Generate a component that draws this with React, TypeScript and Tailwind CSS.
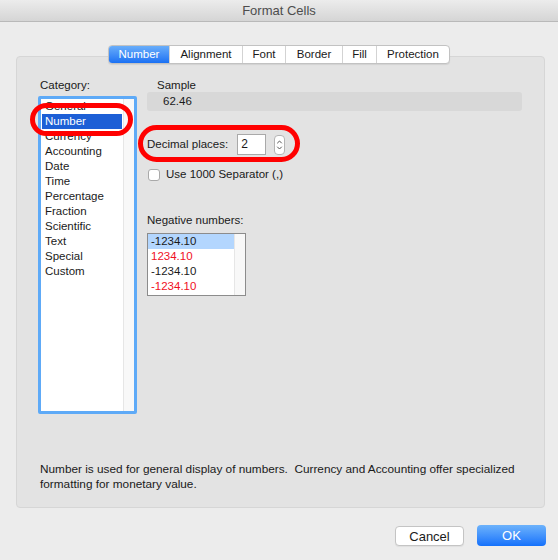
import React from 'react';

const CATEGORIES = [
  'General',
  'Number',
  'Currency',
  'Accounting',
  'Date',
  'Time',
  'Percentage',
  'Fraction',
  'Scientific',
  'Text',
  'Special',
  'Custom',
];

const TABS: Array<{ label: string; w: string }> = [
  { label: 'Number', w: 'w-[60px]' },
  { label: 'Alignment', w: 'w-[73px]' },
  { label: 'Font', w: 'w-[43px]' },
  { label: 'Border', w: 'w-[57px]' },
  { label: 'Fill', w: 'w-[34px]' },
  { label: 'Protection', w: 'w-[73px]' },
];

const NEGATIVES: Array<{ text: string; red: boolean }> = [
  { text: '-1234.10', red: false },
  { text: '1234.10', red: true },
  { text: '-1234.10', red: false },
  { text: '-1234.10', red: true },
];

function Stepper() {
  return (
    <div className="w-[11px] h-[20px] rounded-[4px] border border-[#b4b4b4] bg-white flex items-center justify-center">
      <svg width="7" height="14" viewBox="0 0 7 14" fill="none" stroke="#555" strokeWidth="1" strokeLinecap="round" strokeLinejoin="round">
        <path d="M1.5 5 L3.5 3 L5.5 5" />
        <path d="M1.5 9 L3.5 11 L5.5 9" />
      </svg>
    </div>
  );
}

export default function App() {
  return (
    <div className="relative w-[558px] h-[560px] overflow-hidden bg-[#ececec] text-[#1a1a1a] [font-family:'Liberation_Sans',Arial,sans-serif]">
      {/* title bar */}
      <div className="h-[22px] border-b border-[#b9b9b9] bg-gradient-to-b from-[#ececec] to-[#d5d5d5] flex items-center justify-center text-[13px] text-[#4d4d4d]">
        Format Cells
      </div>

      {/* tabs */}
      <div className="relative z-10 h-[42px] pt-[23px] -mb-[8px] flex justify-center">
        <div className="flex h-[19px] rounded-[4px] border border-[#c2c2c2] bg-white shadow-[0_1px_1px_rgba(0,0,0,0.08)] text-[11.5px]">
          {TABS.map((t, i) => (
            <div
              key={t.label}
              className={`${t.w} flex items-center justify-center ${
                i === 0
                  ? 'rounded-l-[3px] bg-gradient-to-b from-[#68adfa] to-[#1a70f3] text-white'
                  : 'border-l border-[#d3d3d3] text-[#1a1a1a]'
              }`}
            >
              {t.label}
            </div>
          ))}
        </div>
      </div>

      {/* group box */}
      <div className="ml-[16px] w-[529px] h-[452px] rounded-[4px] border border-[#d6d6d6] bg-[#e3e3e3] pt-[21px] pl-[21px] text-[11.5px] flex flex-col">
        <div className="flex">
          <div className="flex flex-col">
            <div className="h-[15px] leading-[15px] pl-[2px]">Category:</div>
            <div className="mt-[3px] w-[99px] h-[318px] rounded-[2px] border-[3px] border-[#5eaaf7] bg-white flex">
              <div className="flex-1 px-[1px]">
                {CATEGORIES.map((c) => (
                  <div
                    key={c}
                    className={`h-[15px] leading-[15px] pl-[3px] ${c === 'Number' ? 'bg-[#1d5fd6] text-white' : ''}`}
                  >
                    {c}
                  </div>
                ))}
              </div>
              <div className="w-[11px] bg-[#f8f8f8] border-l border-[#e6e6e6]" />
            </div>
          </div>

          <div className="ml-[10px] w-[375px] flex flex-col">
            <div className="h-[14px] leading-[14px] pl-[10px]">Sample</div>
            <div className="h-[19px] rounded-[3px] bg-[#d8d8d8] pl-[16px] leading-[19px]">62.46</div>

            <div className="mt-[23px] h-[21px] flex items-center">
              <span>Decimal places:</span>
              <div className="ml-[9px] w-[29px] h-[21px] border border-[#a9a9a9] bg-white pl-[3px] leading-[19px] text-[12px]">
                2
              </div>
              <div className="ml-[8px]">
                <Stepper />
              </div>
            </div>

            <div className="mt-[13px] h-[13px] flex items-center">
              <div className="ml-[1px] w-[12px] h-[12px] rounded-[3px] border border-[#a9a9a9] bg-white" />
              <span className="ml-[6px]">Use 1000 Separator (,)</span>
            </div>

            <div className="mt-[32px] h-[14px] leading-[14px]">Negative numbers:</div>
            <div className="mt-[6px] w-[99px] h-[63px] border border-[#8c8c8c] bg-white flex">
              <div className="flex-1">
                {NEGATIVES.map((n, i) => (
                  <div
                    key={i}
                    className={`h-[15px] leading-[15px] pl-[3px] ${i === 0 ? 'bg-[#b3d6fe]' : ''} ${
                      n.red ? 'text-[#f0101e]' : ''
                    }`}
                  >
                    {n.text}
                  </div>
                ))}
              </div>
              <div className="w-[11px] bg-[#f8f8f8] border-l border-[#e6e6e6]" />
            </div>
          </div>
        </div>

        <p className="mt-[48px] pl-[2px] leading-[15px] whitespace-pre text-[11.8px]">
          {'Number is used for general display of numbers.  Currency and Accounting offer specialized\nformatting for monetary value.'}
        </p>
      </div>

      {/* buttons */}
      <div className="mt-[17px] pr-[12px] flex justify-end items-start gap-[13px] text-[13px]">
        <button className="w-[69px] h-[20px] mt-[1px] rounded-[4px] border border-[#c4c4c4] bg-white shadow-[0_1px_1px_rgba(0,0,0,0.06)]">
          Cancel
        </button>
        <button className="w-[69px] h-[21px] rounded-[4px] bg-gradient-to-b from-[#6cb2fb] to-[#1270fb] text-white">
          OK
        </button>
      </div>

      {/* red annotation rings */}
      <div className="absolute left-[30px] top-[103px] w-[103px] h-[33px] rounded-full border-[5px] border-[#ff0000]" />
      <div className="absolute left-[138px] top-[125px] w-[162px] h-[37px] rounded-full border-[5px] border-[#ff0000]" />
    </div>
  );
}
